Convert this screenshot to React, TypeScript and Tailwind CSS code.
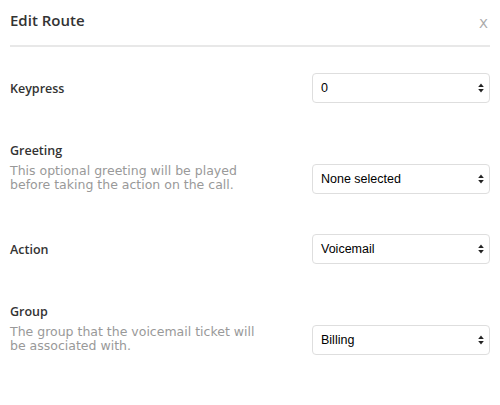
import React from "react";

const labelFont = { fontFamily: '"Open Sans", "DejaVu Sans", sans-serif' };
const descFont = { fontFamily: '"DejaVu Sans", "Open Sans", sans-serif' };

function Arrows() {
    return (
        <svg width="6" height="10" viewBox="0 0 6 10" className="absolute right-[6px] top-1/2 -translate-y-1/2 pointer-events-none">
            <path d="M3 0.5 L5.8 4 H0.2 Z" fill="#222" />
            <path d="M3 9.5 L5.8 6 H0.2 Z" fill="#222" />
        </svg>
    );
}

function Select({ value }: { value: string }) {
    return (
        <div className="relative w-[178px] h-[30px] shrink-0">
            <div className="w-full h-full flex items-center pl-[8px] bg-white border border-[#dedede] rounded-[4px] text-[12.5px] text-black font-['Liberation_Sans',Arial,sans-serif]">
                {value}
            </div>
            <Arrows />
        </div>
    );
}

function Row({ label, desc, value }: { label: string; desc?: string; value: string }) {
    return (
        <div className={`flex justify-between ${desc ? "items-end" : "items-center"}`}>
            <div className={desc ? "mb-[2px]" : ""}>
                <div className="text-[12.5px] font-semibold text-[#333] leading-[15px]" style={labelFont}>{label}</div>
                {desc && (
                    <div className="mt-[6px] text-[12.5px] text-[#999] leading-[14px] w-[250px]" style={descFont}>{desc}</div>
                )}
            </div>
            <Select value={value} />
        </div>
    );
}

export default function App() {
    return (
        <div className="w-[500px] h-[405px] bg-white px-[10px]">
            {/* Header */}
            <div className="flex justify-between items-start pt-[13px] pb-[15px] border-b-2 border-[#e8e8e8]">
                <h2 className="text-[15px] font-semibold text-[#333] leading-[15px]" style={labelFont}>Edit Route</h2>
                <span className="text-[13px] text-[#aaa] leading-none mt-[4px] mr-[2px]" style={descFont}>X</span>
            </div>

            <div className="flex flex-col gap-[40px] pt-[26px]">
                <Row label="Keypress" value="0" />
                <Row label="Greeting" desc="This optional greeting will be played before taking the action on the call." value="None selected" />
                <Row label="Action" value="Voicemail" />
                <Row label="Group" desc="The group that the voicemail ticket will be associated with." value="Billing" />
            </div>
        </div>
    );
}
